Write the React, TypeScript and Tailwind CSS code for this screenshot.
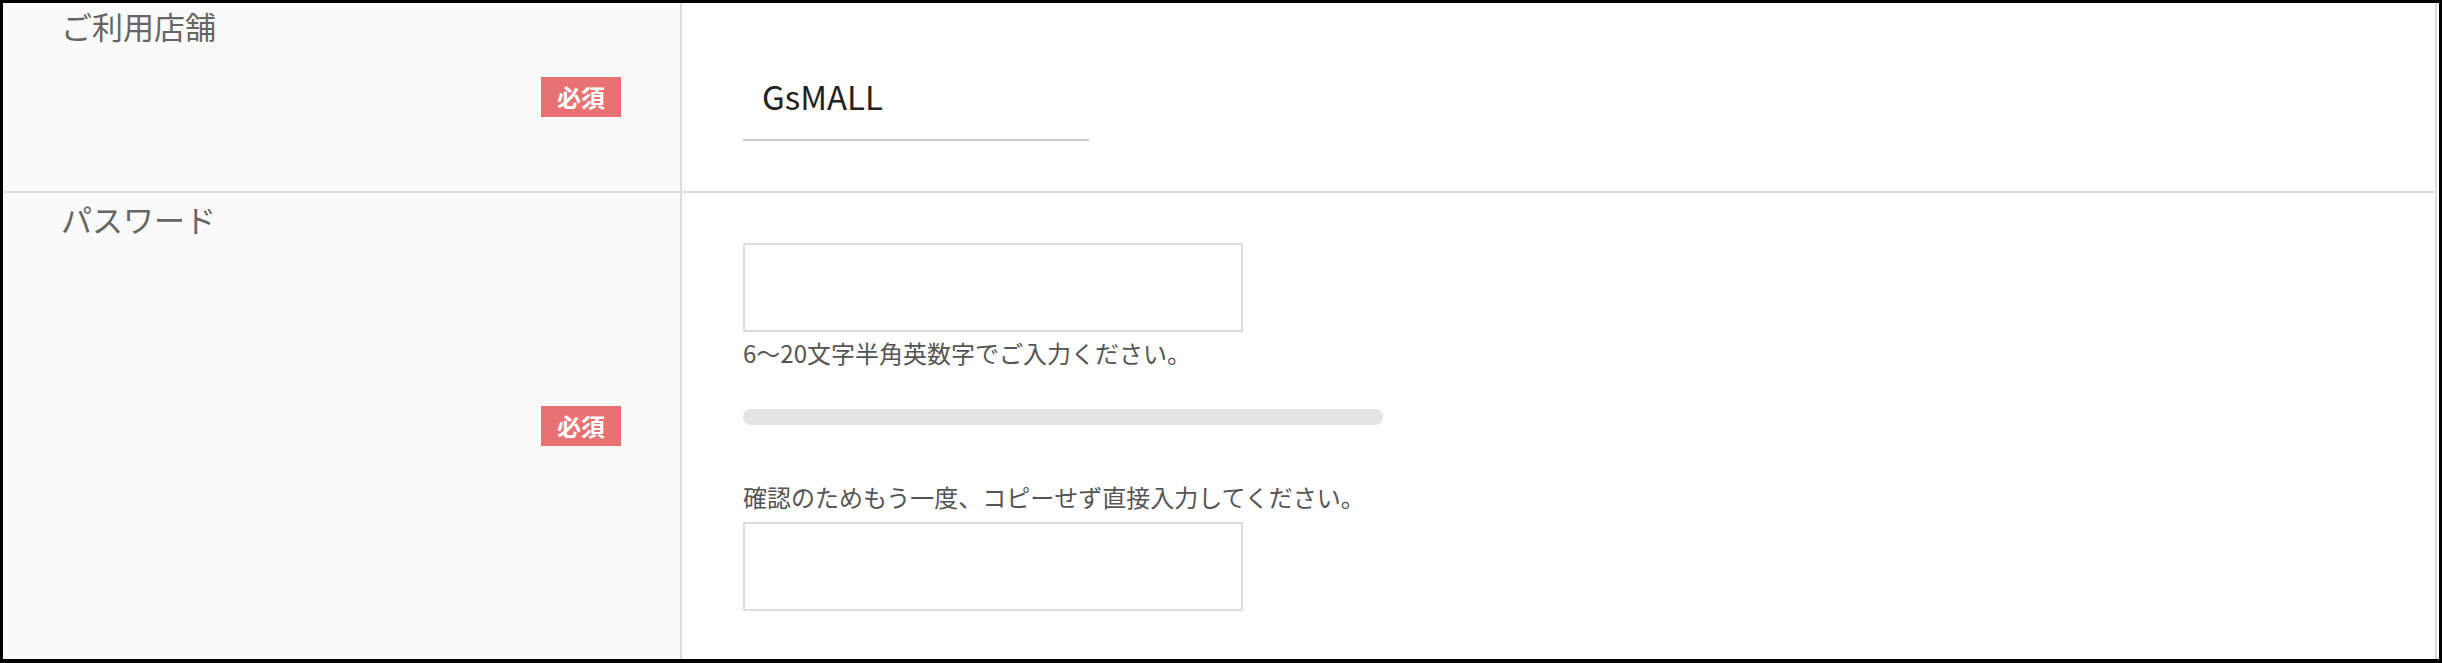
import React from "react";

const FONT = "font-['Noto_Sans_CJK_JP','Noto_Sans',sans-serif]";

function RequiredBadge() {
  return (
    <span className="col-start-1 row-start-1 self-center justify-self-end mr-[59px] h-[40px] px-4 bg-[#e87272] text-white text-[24px] leading-[40px] font-bold">
      必須
    </span>
  );
}

function LabelCell({ label, top }: { label: string; top: string }) {
  return (
    <div className="grid w-[679px] shrink-0 bg-[#fafafa] border-r-2 border-[#dddddd]">
      <div
        className={`col-start-1 row-start-1 self-start justify-self-start pl-[58px] ${top} text-[31px] leading-[45px] text-[#666666]`}
      >
        {label}
      </div>
      <RequiredBadge />
    </div>
  );
}

export default function App() {
  return (
    <div
      className={`${FONT} h-[663px] w-full bg-white border-black border-t-[3px] border-x-[3px] border-b-4`}
    >
      <div className="h-full border-r-2 border-[#dddddd] mr-[2px] flex flex-col">
        {/* 店舗 */}
        <div className="flex h-[190px] border-b-2 border-[#dddddd]">
          <LabelCell label="ご利用店舗" top="pt-0" />
          <div className="flex items-center pl-[61px]">
            <input
              type="text"
              readOnly
              value="GsMALL"
              className="h-[88px] w-[346px] pl-[19px] border-b-2 border-[#cccccc] bg-transparent text-[33px] text-[#222222] outline-none"
            />
          </div>
        </div>

        {/* パスワード */}
        <div className="flex flex-1">
          <LabelCell label="パスワード" top="pt-[3px]" />
          <div className="flex flex-col items-start pl-[61px] pt-[50px]">
            <input
              type="password"
              className="h-[89px] w-[500px] border-2 border-[#dddddd] bg-white outline-none"
            />
            <p className="mt-[3px] text-[24px] leading-[36px] text-[#555555]">
              6〜20文字半角英数字でご入力ください。
            </p>
            <div className="mt-[38px] h-[16px] w-[640px] rounded-full bg-[#e4e4e4]" />
            <p className="mt-[54px] text-[24px] leading-[36px] text-[#555555]">
              確認のためもう一度、コピーせず直接入力してください。
            </p>
            <input
              type="password"
              className="mt-[7px] h-[89px] w-[500px] border-2 border-[#dddddd] bg-white outline-none"
            />
          </div>
        </div>
      </div>
    </div>
  );
}
